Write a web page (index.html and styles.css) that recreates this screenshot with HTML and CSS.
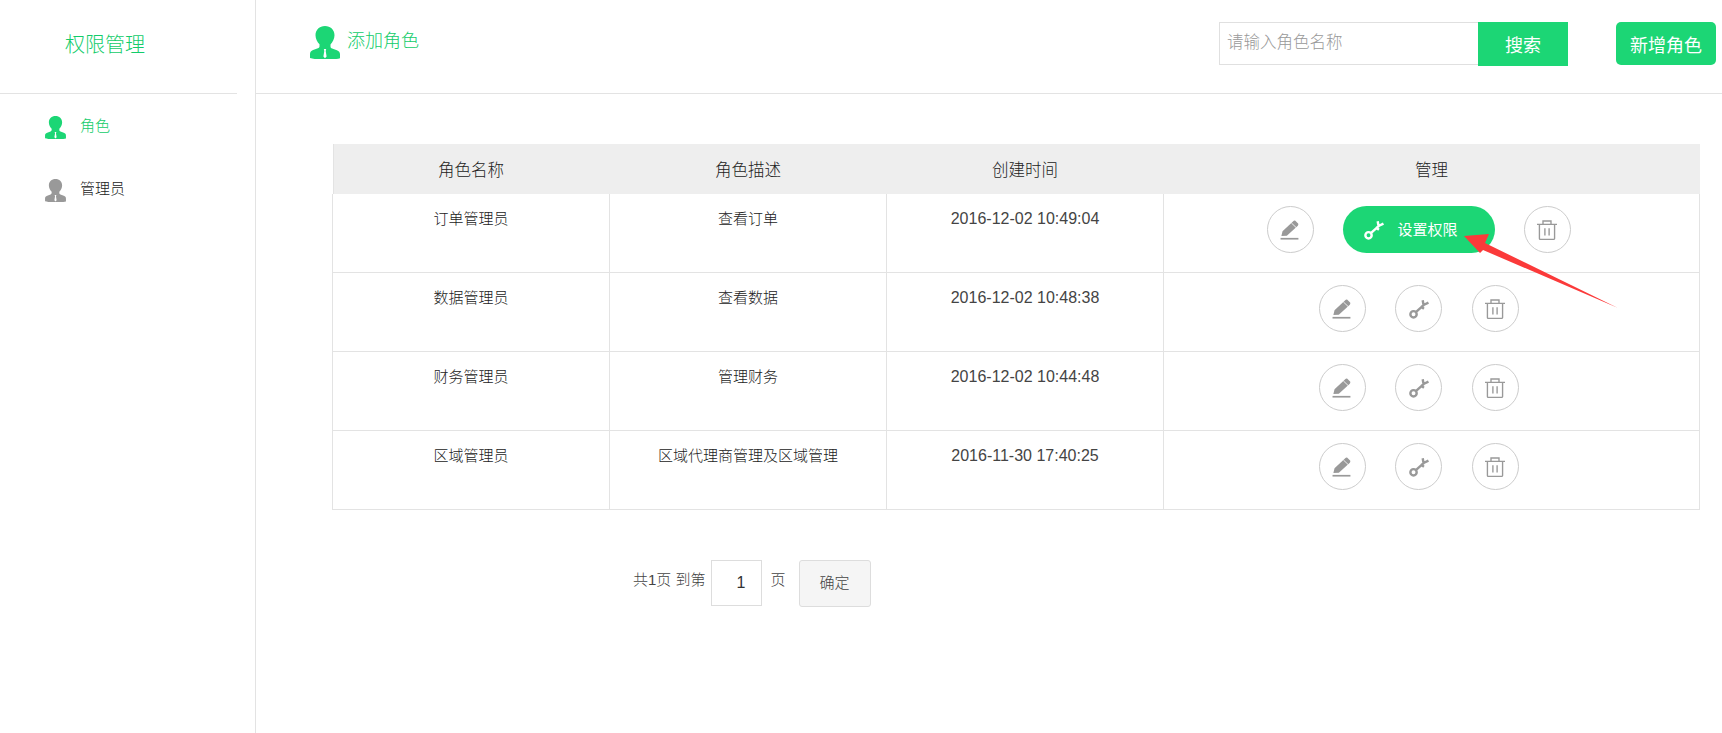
FILE: index.html
```html
<!DOCTYPE html>
<html lang="zh">
<head>
<meta charset="utf-8">
<title>权限管理</title>
<link rel="stylesheet" href="styles.css">
</head>
<body>
<svg class="defs" width="0" height="0" aria-hidden="true">
  <symbol id="person" viewBox="0 0 30 33">
    <path d="M15 0c5.500 0 9.500 3.800 9.500 9.200 0 3.500-1.800 7-4 9.200v2c0 1 .6 1.600 1.600 2l4.800 1.800c2 .8 3.100 2 3.100 4v4c-3.500 1-9.200 1.600-15 1.600S3.500 33 0 32v-4c0-2 1.100-3.200 3.100-4l4.800-1.800c1-.4 1.600-1 1.600-2v-2C7.300 16 5.500 12.700 5.500 9.200 5.500 3.800 9.500 0 15 0z"/>
    <path class="tie" d="M13.800 23h2.400l-.5 2 .9 5.500-1.600 1.800-1.600-1.800.9-5.500z"/>
  </symbol>
  <symbol id="pen" viewBox="0 0 18 19">
    <path d="M.8 15.200 1.900 10.600 11.800 1.400C12.400.8 13.200.3 13.800.5L16.700 3.300C17.200 4 16.800 5 16.200 5.600L6 15z"/>
    <path class="gap" d="M10.300 2.800 15 7.300" fill="none" stroke-width=".8"/>
    <rect y="17" width="17" height="1.600"/>
  </symbol>
  <symbol id="key" viewBox="0 0 19 19">
    <g fill="none" stroke="currentColor" stroke-width="2.300">
      <circle cx="4.300" cy="14.500" r="3"/>
      <path d="M6.500 12.400 15 4.800M13 1.200 13.800 5.600M18.500 3.400 14.300 5.500M14.200 9.200 11 6.800"/>
    </g>
  </symbol>
  <symbol id="trash" viewBox="0 0 19 19">
    <path fill="none" stroke="currentColor" stroke-width="1.300" d="M0 4.200h19M2.300 4.200v13.400a.8.800 0 0 0 .8.800h12.800a.8.800 0 0 0 .8-.8V4.200M5.700 4V1h7.600v3M7.500 7.800v7M11.500 7.800v7"/>
  </symbol>
</svg>

<div class="app">
  <aside class="sidebar">
    <div class="brand">权限管理</div>
    <nav class="menu">
      <a class="menu-item active"><svg class="menu-icon"><use href="#person"/></svg><span>角色</span></a>
      <a class="menu-item"><svg class="menu-icon"><use href="#person"/></svg><span>管理员</span></a>
    </nav>
  </aside>
  <main class="main">
    <header class="topbar">
      <div class="page-title"><svg class="title-icon"><use href="#person"/></svg><span>添加角色</span></div>
      <form class="search">
        <input class="search-input" type="text" placeholder="请输入角色名称">
        <button class="search-btn" type="button">搜索</button>
      </form>
      <button class="add-btn" type="button">新增角色</button>
    </header>
    <section class="content">
      <table class="roles">
        <colgroup><col class="c1"><col class="c2"><col class="c3"><col class="c4"></colgroup>
        <thead>
          <tr><th>角色名称</th><th>角色描述</th><th>创建时间</th><th>管理</th></tr>
        </thead>
        <tbody>
          <tr>
            <td>订单管理员</td><td>查看订单</td><td class="date">2016-12-02 10:49:04</td>
            <td><div class="actions">
              <button class="round" type="button"><svg class="ico"><use href="#pen"/></svg></button>
              <button class="pill" type="button"><svg class="pill-ico"><use href="#key"/></svg><span>设置权限</span></button>
              <button class="round" type="button"><svg class="ico"><use href="#trash"/></svg></button>
            </div></td>
          </tr>
          <tr>
            <td>数据管理员</td><td>查看数据</td><td class="date">2016-12-02 10:48:38</td>
            <td><div class="actions plain">
              <button class="round" type="button"><svg class="ico"><use href="#pen"/></svg></button>
              <button class="round" type="button"><svg class="ico"><use href="#key"/></svg></button>
              <button class="round" type="button"><svg class="ico"><use href="#trash"/></svg></button>
            </div></td>
          </tr>
          <tr>
            <td>财务管理员</td><td>管理财务</td><td class="date">2016-12-02 10:44:48</td>
            <td><div class="actions plain">
              <button class="round" type="button"><svg class="ico"><use href="#pen"/></svg></button>
              <button class="round" type="button"><svg class="ico"><use href="#key"/></svg></button>
              <button class="round" type="button"><svg class="ico"><use href="#trash"/></svg></button>
            </div></td>
          </tr>
          <tr>
            <td>区域管理员</td><td>区域代理商管理及区域管理</td><td class="date">2016-11-30 17:40:25</td>
            <td><div class="actions plain">
              <button class="round" type="button"><svg class="ico"><use href="#pen"/></svg></button>
              <button class="round" type="button"><svg class="ico"><use href="#key"/></svg></button>
              <button class="round" type="button"><svg class="ico"><use href="#trash"/></svg></button>
            </div></td>
          </tr>
        </tbody>
      </table>
      <div class="pager">
        <span>共1页 到第</span>
        <input class="page-input" type="text" value="1">
        <span>页</span>
        <button class="page-btn" type="button">确定</button>
      </div>
    </section>
  </main>
</div>
<svg class="arrow" viewBox="0 0 160 80" aria-hidden="true"><path d="M4 6 29 4 25 13 158 78 23 20 20 23z"/></svg>
</body>
</html>
```
FILE: styles.css
```css
* { box-sizing: border-box; }
html, body { margin: 0; height: 100%; }
body {
  position: relative;
  background: #fff;
  color: #222;
  font-family: "Liberation Sans", "Noto Sans CJK SC", sans-serif;
  font-size: 15px;
  font-weight: 300;
  overflow: hidden;
}
.defs { position: absolute; }
.app { display: flex; height: 733px; }

.sidebar { width: 256px; flex: none; border-right: 1px solid #e3e3e3; padding-right: 18px; }
.brand {
  height: 94px;
  border-bottom: 1px solid #e3e3e3;
  padding: 31px 0 0 65px;
  color: #12cc6a;
  font-size: 20px;
  line-height: 28px;
}
.menu { display: flex; flex-direction: column; padding-top: 22px; gap: 40px; }
.menu-item { display: flex; align-items: center; gap: 14px; padding-left: 45px; height: 23px; color: #222; }
.menu-item span { margin-bottom: 7px; }
.menu-item.active { color: #12cc6a; }
.menu-icon { width: 21px; height: 23px; fill: #999; }
.active .menu-icon { fill: #1cd675; }
.tie { fill: #fff; }
.gap { stroke: #fff; }

.main { flex: 1; min-width: 0; }
.topbar {
  display: flex;
  align-items: flex-start;
  height: 94px;
  border-bottom: 1px solid #e3e3e3;
  padding: 22px 6px 0 54px;
}
.page-title { display: flex; align-items: center; gap: 7px; color: #12cc6a; font-size: 18px; line-height: 26px; margin-right: auto; margin-top: 4px; }
.title-icon { width: 30px; height: 33px; fill: #1cd675; }
.page-title span { margin-top: -3px; }
.search { display: flex; align-items: flex-start; margin-right: 48px; }
.search-input {
  width: 259px;
  height: 43px;
  border: 1px solid #e0e0e0;
  border-right: 0;
  padding: 0 8px 3px 7px;
  font: inherit;
  font-size: 16.5px;
  outline: 0;
}
.search-input::placeholder { color: #999; }
.search-btn {
  width: 90px;
  height: 44px;
  border: 0;
  padding: 0 0 1px;
  background: #1cd675;
  color: #fff;
  font: inherit;
  font-weight: 400;
  font-size: 18px;
}
.add-btn {
  width: 100px;
  height: 43px;
  border: 0;
  border-radius: 5px;
  background: #1cd675;
  color: #fff;
  font: inherit;
  font-weight: 400;
  font-size: 18px;
}

.content { padding: 50px 22px 0 76px; }
.roles { width: 100%; border-collapse: collapse; table-layout: fixed; }
.c1, .c2, .c3 { width: 277px; }
.roles th {
  height: 50px;
  background: #eee;
  font-weight: 300;
  font-size: 16.5px;
  color: #222;
  padding: 0 0 1px;
}
.roles td {
  height: 79px;
  border: 1px solid #e3e3e3;
  border-top-width: 0;
  vertical-align: top;
  text-align: center;
  padding: 15px 0 0;
  line-height: 20px;
}
.roles tbody tr:first-child td { height: 78px; }
.roles td.date { font-size: 16px; color: #444; }
.roles tbody tr + tr td { border-top-width: 1px; }
.roles th:first-child { box-shadow: inset 1px 0 0 #e3e3e3; }
.actions { display: flex; justify-content: center; gap: 29px; padding-right: 26px; margin-top: -3px; }
.actions.plain { gap: 29.5px; padding-right: 25.5px; }
.round {
  width: 47px;
  height: 47px;
  padding: 1px 0 0;
  display: flex;
  align-items: center;
  justify-content: center;
  background: #fff;
  border: 1px solid #ccc;
  border-radius: 50%;
  color: #999;
}
.ico { width: 20px; height: 20px; fill: #999; }
.pill {
  width: 152px;
  height: 47px;
  padding: 0 0 0 21px;
  display: flex;
  align-items: center;
  gap: 14px;
  border: 0;
  border-radius: 24px;
  background: #1cd675;
  color: #fff;
  font: inherit;
  font-weight: 400;
  font-size: 15px;
}
.pill-ico { width: 20px; height: 20px; }

.pager { display: flex; align-items: flex-start; margin: 50px 0 0 301px; color: #444; line-height: 40px; }
.pager > span:first-child { margin-right: 5px; }
.page-input {
  width: 51px;
  height: 46px;
  margin-right: 9px;
  border: 1px solid #ddd;
  padding: 0 0 0 10px;
  text-align: center;
  font: inherit;
  font-size: 16px;
  color: #333;
  outline: 0;
}
.page-btn {
  width: 72px;
  height: 47px;
  margin-left: 13px;
  padding: 0 0 1px;
  border: 1px solid #ddd;
  border-radius: 3px;
  background: #f5f5f5;
  color: #444;
  font: inherit;
}
.arrow { position: absolute; left: 1460px; top: 230px; width: 160px; height: 80px; fill: #fb3a3a; }
```
